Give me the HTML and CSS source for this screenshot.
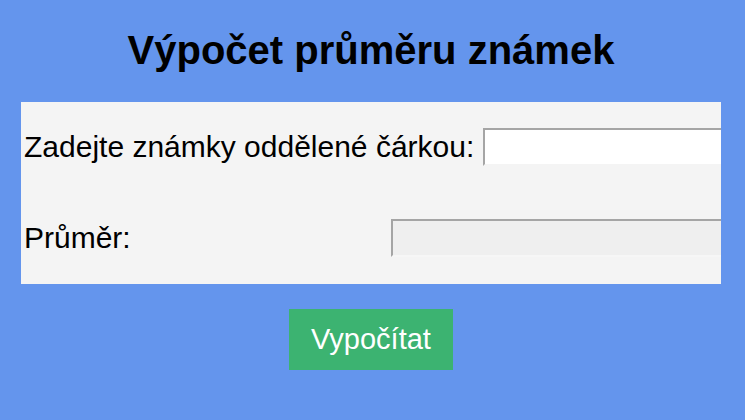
FILE: index.html
```html
<!DOCTYPE html>
<html lang="cs">
<head>
<meta charset="utf-8">
<title>Výpočet průměru známek</title>
<link rel="stylesheet" href="styles.css">
</head>
<body>
<main class="app">
  <h1 class="title">Výpočet průměru známek</h1>
  <section class="panel">
    <div class="row row-input">
      <label class="label" for="grades">Zadejte známky oddělené čárkou:</label>
      <input class="field" id="grades" type="text">
    </div>
    <div class="row row-result">
      <label class="label label-result" for="avg">Průměr:</label>
      <input class="field field-readonly" id="avg" type="text" readonly>
    </div>
  </section>
  <button class="btn" type="button">Vypočítat</button>
</main>
</body>
</html>
```
FILE: styles.css
```css
html, body {
  margin: 0;
  padding: 0;
}
body {
  background: #6495ed;
  font-family: "Liberation Sans", Arial, sans-serif;
  color: #000;
  width: 745px;
  height: 420px;
  overflow: hidden;
}
.app {
  display: flex;
  flex-direction: column;
  align-items: center;
  padding: 27px 3px 0 0;
}
.title {
  margin: 0 0 29px;
  font-size: 40px;
  font-weight: bold;
  line-height: 46px;
  text-align: center;
}
.panel {
  width: 697px;
  background: #f4f4f4;
  padding: 26px 0 27px 3px;
  overflow: hidden;
  display: flex;
  flex-direction: column;
  gap: 53px;
}
.row {
  display: flex;
  align-items: center;
  height: 38px;
}
.label {
  font-size: 30px;
  white-space: nowrap;
  flex-shrink: 0;
}
.row-input {
  gap: 9px;
}
.label-result {
  width: 367px;
}
.field {
  flex-shrink: 0;
  box-sizing: border-box;
  width: 360px;
  height: 38px;
  margin: 0;
  padding: 0 4px;
  background: #fff;
  border: 2px solid #f4f4f4;
  border-top-color: #a5a5a5;
  border-left-color: #a5a5a5;
  font-size: 20px;
  font-family: "Liberation Sans", Arial, sans-serif;
  outline: none;
}
.field-readonly {
  background: #efefef;
  border-right-color: #f6f6f6;
  border-bottom-color: #f6f6f6;
}
.btn {
  margin-top: 25px;
  width: 164px;
  height: 61px;
  padding: 0;
  border: none;
  background: #3cb371;
  color: #fff;
  font-family: "Liberation Sans", Arial, sans-serif;
  font-size: 29px;
  cursor: pointer;
}
```
